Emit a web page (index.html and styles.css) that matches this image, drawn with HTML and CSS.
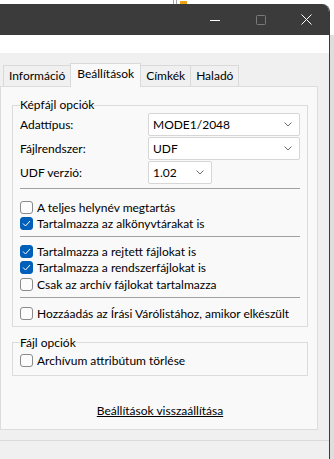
FILE: index.html
```html
<!DOCTYPE html>
<html lang="hu">
<head>
<meta charset="utf-8">
<title>Beállítások</title>
<link rel="stylesheet" href="styles.css">
</head>
<body>
<div class="screen">
  <div class="desk">
    <span class="desk-bar"></span>
    <span class="desk-icon"></span>
  </div>
  <div class="main">
    <div class="window">
      <div class="titlebar">
        <span class="ctl ctl-min"><svg width="10" height="10" viewBox="0 0 10 10"><path d="M0 5.5H10" stroke="#fff" stroke-width="1"/></svg></span>
        <span class="ctl ctl-max"><svg width="10" height="10" viewBox="0 0 10 10"><rect x="0.5" y="0.5" width="9" height="9" rx="1" fill="none" stroke="#7a7a7a" stroke-width="1"/></svg></span>
        <span class="ctl ctl-close"><svg width="11" height="11" viewBox="0 0 11 11"><path d="M0.5 0.5L10.5 10.5M10.5 0.5L0.5 10.5" stroke="#fff" stroke-width="1"/></svg></span>
      </div>
      <div class="band"></div>
      <div class="client">
        <div class="tabs">
          <span class="tab">Információ</span>
          <span class="tab tab-active">Beállítások</span>
          <span class="tab">Címkék</span>
          <span class="tab">Haladó</span>
        </div>
        <div class="panel">
          <fieldset class="group group-image">
            <legend>Képfájl opciók</legend>
            <div class="field">
              <span class="field-label">Adattípus:</span>
              <span class="combo combo-wide"><span>MODE1/2048</span><svg class="chev" width="8" height="5" viewBox="0 0 8 5"><path d="M0.5 0.5L4 4L7.5 0.5" fill="none" stroke="#6b6b6b" stroke-width="1"/></svg></span>
            </div>
            <div class="field">
              <span class="field-label">Fájlrendszer:</span>
              <span class="combo combo-wide"><span>UDF</span><svg class="chev" width="8" height="5" viewBox="0 0 8 5"><path d="M0.5 0.5L4 4L7.5 0.5" fill="none" stroke="#6b6b6b" stroke-width="1"/></svg></span>
            </div>
            <div class="field">
              <span class="field-label">UDF verzió:</span>
              <span class="combo combo-small"><span>1.02</span><svg class="chev" width="8" height="5" viewBox="0 0 8 5"><path d="M0.5 0.5L4 4L7.5 0.5" fill="none" stroke="#6b6b6b" stroke-width="1"/></svg></span>
            </div>
            <div class="sep sep-1"></div>
            <div class="check check-first"><span class="box"></span><span>A teljes helynév megtartás</span></div>
            <div class="check"><span class="box box-on"><svg width="9" height="7" viewBox="0 0 9 7"><path d="M1 3.5L3.5 6L8 1" fill="none" stroke="#fff" stroke-width="1"/></svg></span><span>Tartalmazza az alkönyvtárakat is</span></div>
            <div class="sep sep-2"></div>
            <div class="check check-after2"><span class="box box-on"><svg width="9" height="7" viewBox="0 0 9 7"><path d="M1 3.5L3.5 6L8 1" fill="none" stroke="#fff" stroke-width="1"/></svg></span><span>Tartalmazza a rejtett fájlokat is</span></div>
            <div class="check"><span class="box box-on"><svg width="9" height="7" viewBox="0 0 9 7"><path d="M1 3.5L3.5 6L8 1" fill="none" stroke="#fff" stroke-width="1"/></svg></span><span>Tartalmazza a rendszerfájlokat is</span></div>
            <div class="check"><span class="box"></span><span>Csak az archív fájlokat tartalmazza</span></div>
            <div class="sep sep-3"></div>
            <div class="check check-after3"><span class="box"></span><span>Hozzáadás az Írási Várólistához, amikor elkészült</span></div>
          </fieldset>
          <fieldset class="group group-file">
            <legend>Fájl opciók</legend>
            <div class="check"><span class="box"></span><span>Archívum attribútum törlése</span></div>
          </fieldset>
          <div class="reset"><a class="reset-link" href="#">Beállítások visszaállítása</a></div>
        </div>
        <div class="footer-line"></div>
      </div>
    </div>
    <div class="side"></div>
  </div>
</div>
</body>
</html>
```
FILE: styles.css
```css
* { box-sizing: border-box; }
html, body { margin: 0; padding: 0; }
body {
  background: #ffffff;
  font-family: "Segoe UI", Lato, "Noto Sans", sans-serif;
  font-size: 12px;
  color: #000;
}
.screen {
  width: 334px;
  height: 459px;
  display: flex;
  flex-direction: column;
  overflow: hidden;
}
.desk {
  height: 4px;
  display: flex;
  align-items: flex-start;
  padding-left: 173px;
  gap: 3px;
}
.desk-bar {
  width: 4px;
  height: 4px;
  border-left: 1px solid #a9a9a9;
  border-right: 1px solid #a9a9a9;
}
.desk-icon {
  width: 7px;
  height: 4px;
  margin-top: 1px;
  background: #e8a617;
}
.main {
  flex: 1;
  display: flex;
}
.window {
  width: 330px;
  display: flex;
  flex-direction: column;
  border-right: 1px solid #3a3a3a;
  border-top-right-radius: 8px;
  overflow: hidden;
}
.side {
  flex: 1;
  margin-top: 31px;
  background: #dedede;
}
.titlebar {
  height: 31px;
  background: #3b3b3b;
  display: flex;
  justify-content: flex-end;
  align-items: center;
}
.ctl {
  width: 46px;
  height: 31px;
  display: flex;
  align-items: center;
  justify-content: center;
}
.ctl-close { width: 45px; }
.band {
  height: 18px;
  background: #ffffff;
}
.client {
  flex: 1;
  background: #f0f0f0;
  padding-top: 10px;
  display: flex;
  flex-direction: column;
}
.tabs {
  display: flex;
  align-items: flex-end;
  height: 23px;
  padding-left: 3px;
  position: relative;
  z-index: 1;
}
.tab {
  height: 21px;
  padding: 0 5px 0 5px;
  border: 1px solid #d9d9d9;
  border-bottom: none;
  background: #f0f0f0;
  line-height: 20px;
  margin-right: -1px;
}
.tab-active {
  height: 24px;
  margin-bottom: -1px;
  background: #f9f9f9;
  padding: 0 6px 0 6px;
  line-height: 19px;
}
.panel {
  width: 318px;
  height: 344px;
  border: 1px solid #dcdcdc;
  background: #f9f9f9;
  padding: 10px 9px 0 11px;
  display: flex;
  flex-direction: column;
}
.group {
  margin: 0;
  border: 1px solid #dcdcdc;
  padding: 0 7px 4px 7px;
  min-width: 0;
}
.group legend {
  padding: 0;
  margin-left: 0;
  line-height: 16px;
  height: 16px;
}
.field {
  display: flex;
  align-items: center;
  height: 23px;
  margin-bottom: 1px;
}
.field-label {
  width: 128px;
  flex-shrink: 0;
}
.combo {
  height: 23px;
  border: 1px solid #d6d6d6;
  border-radius: 2px;
  background: #ffffff;
  display: flex;
  align-items: center;
  justify-content: space-between;
  padding: 0 7px 0 4px;
}
.combo-wide { width: 152px; }
.combo-small { width: 64px; }
.sep {
  height: 1px;
  background: #a0a0a0;
}
.sep-1 { margin-top: 4px; }
.sep-2 { margin-top: 4px; }
.sep-3 { margin-top: 4px; }
.check {
  display: flex;
  align-items: center;
  height: 16.5px;
  white-space: nowrap;
}
.check-first { margin-top: 10px; }
.check-after2 { margin-top: 6px; }
.check-after3 { margin-top: 7.5px; }
.box {
  width: 13px;
  height: 13px;
  border: 1px solid #8a8a8a;
  border-radius: 3px;
  background: #fcfcfc;
  margin-right: 4px;
  flex-shrink: 0;
  display: flex;
  align-items: center;
  justify-content: center;
}
.box-on {
  background: #005fb8;
  border-color: #005fb8;
}
.group-file {
  margin-top: 8px;
  padding-top: 1.5px;
  padding-bottom: 6px;
}
.reset {
  margin-top: 27px;
  text-align: center;
  line-height: 16px;
}
.reset-link {
  color: #000;
  text-decoration: underline;
}
.footer-line {
  margin-top: 10px;
  height: 1px;
  background: #dadada;
}
```
